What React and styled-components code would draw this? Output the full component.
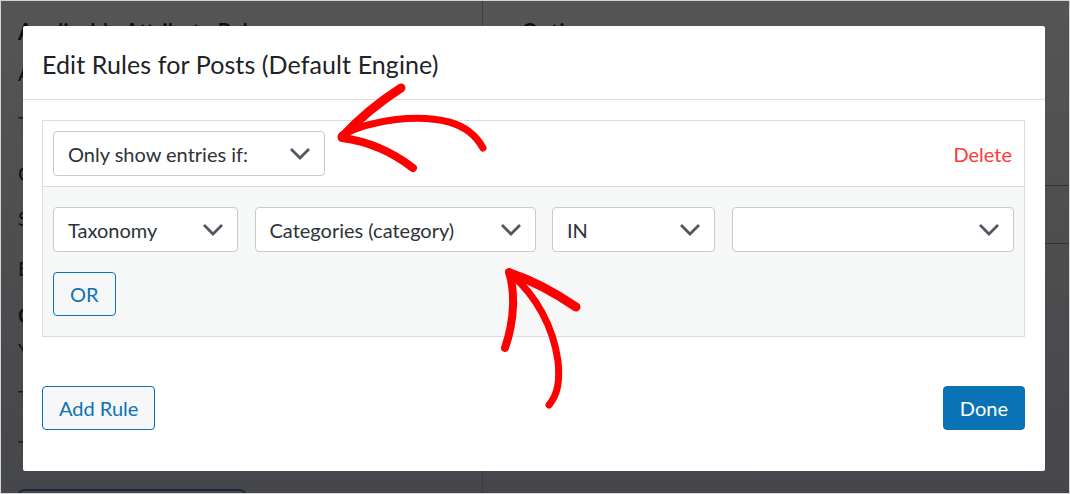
import React from "react";
import styled, { createGlobalStyle } from "styled-components";

const GlobalStyle = createGlobalStyle`
  html, body { margin: 0; padding: 0; background: #fff; }
  body {
    width: 1070px; height: 494px; overflow: hidden;
    font-family: Lato, "Open Sans", "Noto Sans", sans-serif;
    -webkit-font-smoothing: antialiased;
  }
  * { box-sizing: border-box; }
`;

const Stage = styled.div`
  position: relative;
  width: 1070px;
  height: 494px;
  overflow: hidden;
  border: 1px solid #d4d4d4;
  background: #fff;
`;

/* ---------- page behind the dialog ---------- */
const BehindPage = styled.div`
  display: grid;
  grid-template-columns: 481px 1fr;
  height: 100%;
  color: #1d2327;
`;

const BehindColumn = styled.div`
  display: flex;
  flex-direction: column;
  padding: ${(p) => (p.$right ? "18px 0 0 38px" : "18px 0 0 17px")};
  border-left: ${(p) => (p.$right ? "1px solid #c3c4c7" : "none")};
`;

const BehindHeading = styled.div`
  font-size: 22px;
  font-weight: 600;
  line-height: 26px;
`;

const BehindLine = styled.div`
  font-size: 20px;
  line-height: 20px;
  margin-top: ${(p) => p.$gap}px;
  font-weight: ${(p) => (p.$bold ? 700 : 400)};
  color: ${(p) => (p.$tint ? "#6b3b10" : "#1d2327")};
  white-space: nowrap;
`;

const BehindButton = styled.div`
  margin-top: 32px;
  width: 228px;
  height: 40px;
  border: 2px solid #2271b1;
  border-radius: 6px;
`;

const BehindRow = styled.div`
  height: ${(p) => p.$h}px;
  border-bottom: 1px solid #9a9ca2;
`;

const Overlay = styled.div`
  position: absolute;
  inset: 0;
  background: linear-gradient(
    to bottom,
    rgba(0, 0, 0, 0.665),
    rgba(20, 21, 27, 0.79)
  );
`;

/* ---------- dialog ---------- */
const DialogLayer = styled.div`
  position: absolute;
  inset: 0;
  padding: 25px 0 0 22px;
`;

const Dialog = styled.div`
  width: 1022px;
  height: 445px;
  background: #fff;
  border-radius: 2px;
  display: flex;
  flex-direction: column;
`;

const DialogHeader = styled.div`
  height: 74px;
  border-bottom: 1px solid #dcdcde;
  display: flex;
  align-items: center;
  padding: 2px 19px 0;
`;

const DialogTitle = styled.h1`
  margin: 0;
  font-size: 25px;
  font-weight: 400;
  color: #1d2327;
  letter-spacing: 0.1px;
`;

const DialogBody = styled.div`
  padding: 20px 20px 0 19px;
`;

const RuleBox = styled.div`
  border: 1px solid #dcdcde;
`;

const RuleHead = styled.div`
  display: flex;
  align-items: center;
  justify-content: space-between;
  padding: 10px 12px 10px 10px;
  background: #fff;
  border-bottom: 1px solid #dcdcde;
`;

const RuleConditions = styled.div`
  background: #f6f7f7;
  padding: 20px 10px 20px 10px;
  display: flex;
  flex-direction: column;
  gap: 20px;
  align-items: flex-start;
`;

const ConditionRow = styled.div`
  display: grid;
  grid-template-columns: 185px 281px 163px 1fr;
  gap: 16.5px;
  width: 100%;
`;

const Select = styled.div`
  height: 45px;
  width: ${(p) => (p.$width ? `${p.$width}px` : "auto")};
  border: 1px solid #c9cacd;
  border-radius: 4px;
  background: #fff;
  display: flex;
  align-items: center;
  justify-content: space-between;
  padding: 0 13px 0 14px;
  font-size: 20px;
  color: #2c3338;
  white-space: nowrap;
`;

const ChevronSvg = styled.svg`
  flex: none;
  color: #50575e;
`;

const DeleteLink = styled.span`
  font-size: 20px;
  color: #ff3838;
  cursor: pointer;
`;

const OutlineButton = styled.button`
  height: 44px;
  padding: 0 16px;
  border: 1px solid #0a73b6;
  border-radius: 4px;
  background: #f6f7f7;
  color: #0a73b6;
  font-family: inherit;
  font-size: 20px;
  cursor: pointer;
`;

const PrimaryButton = styled(OutlineButton)`
  background: #0a73b6;
  color: #fff;
`;

const DialogFooter = styled.div`
  display: flex;
  justify-content: space-between;
  align-items: center;
  padding: 49px 20px 0 19px;
`;

const Annotations = styled.svg`
  position: absolute;
  inset: 0;
  pointer-events: none;
`;

const Chevron = () => (
  <ChevronSvg width="22" height="13" viewBox="0 0 22 13">
    <polyline
      points="2,2 11,11 20,2"
      fill="none"
      stroke="currentColor"
      strokeWidth="2.8"
    />
  </ChevronSvg>
);

const Dropdown = ({ label, width }) => (
  <Select $width={width}>
    <span>{label}</span>
    <Chevron />
  </Select>
);

export default function App() {
  return (
    <>
      <GlobalStyle />
      <Stage>
        <BehindPage>
          <BehindColumn>
            <BehindHeading>Applicable Attribute Relevance</BehindHeading>
            <BehindLine $gap={18}>Add/Remove Attributes</BehindLine>
            <BehindLine $gap={30} $tint>Title</BehindLine>
            <BehindLine $gap={30}>Content</BehindLine>
            <BehindLine $gap={25}>Slug</BehindLine>
            <BehindLine $gap={30}>Excerpt</BehindLine>
            <BehindLine $gap={27} $bold>Custom Fields</BehindLine>
            <BehindLine $gap={15}>Yoast SEO</BehindLine>
            <BehindLine $gap={27} $tint>Tags</BehindLine>
            <BehindLine $gap={30} $tint>Taxonomies</BehindLine>
            <BehindButton />
          </BehindColumn>
          <BehindColumn $right>
            <BehindHeading>Options</BehindHeading>
            <BehindRow $h={141} />
            <BehindRow $h={58} />
          </BehindColumn>
        </BehindPage>
        <Overlay />
        <DialogLayer>
          <Dialog role="dialog">
            <DialogHeader>
              <DialogTitle>Edit Rules for Posts (Default Engine)</DialogTitle>
            </DialogHeader>
            <DialogBody>
              <RuleBox>
                <RuleHead>
                  <Dropdown label="Only show entries if:" width={272} />
                  <DeleteLink>Delete</DeleteLink>
                </RuleHead>
                <RuleConditions>
                  <ConditionRow>
                    <Dropdown label="Taxonomy" />
                    <Dropdown label="Categories (category)" />
                    <Dropdown label="IN" />
                    <Dropdown label="" />
                  </ConditionRow>
                  <OutlineButton>OR</OutlineButton>
                </RuleConditions>
              </RuleBox>
            </DialogBody>
            <DialogFooter>
              <OutlineButton>Add Rule</OutlineButton>
              <PrimaryButton>Done</PrimaryButton>
            </DialogFooter>
          </Dialog>
        </DialogLayer>
        <Annotations width="1070" height="494" viewBox="0 0 1070 494">
          <g fill="none" stroke="#ff0000" strokeLinecap="round" strokeLinejoin="round">
            <path d="M341,134 C372,118 418,113 448,121 C466,126 476,136 482,147" strokeWidth="7" />
            <path d="M341,136 C356,120 378,101 400,87" strokeWidth="9" />
            <path d="M341,137 C365,140 390,150 412,167" strokeWidth="8" />
            <path d="M511,274 C535,295 552,325 557,360 C559,380 557,393 548,404" strokeWidth="7" />
            <path d="M508,271 C514,290 514,318 504,347" strokeWidth="8" />
            <path d="M509,272 C530,279 553,291 575,306" strokeWidth="9" />
          </g>
        </Annotations>
      </Stage>
    </>
  );
}
